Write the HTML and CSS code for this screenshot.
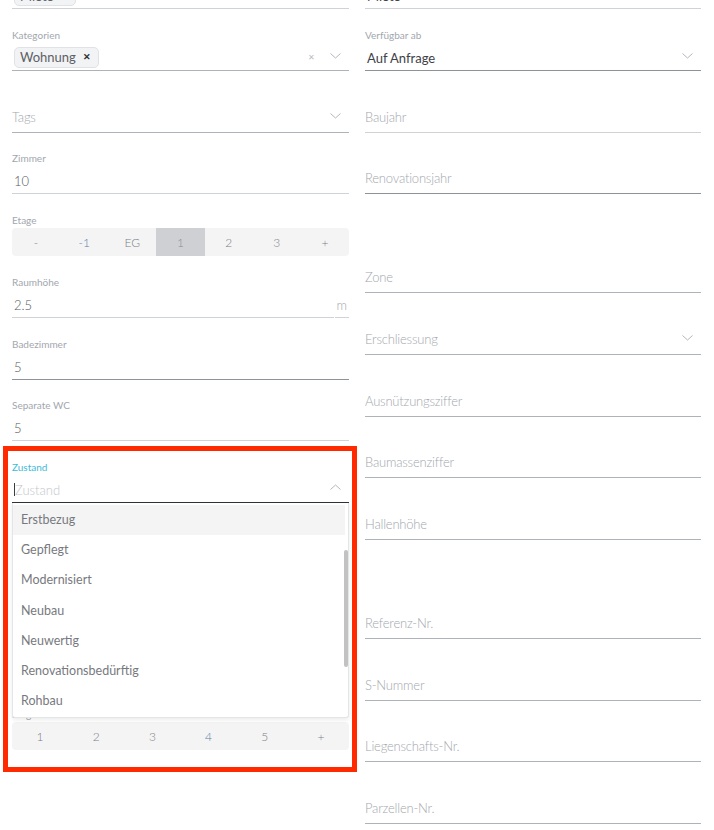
FILE: index.html
```html
<!DOCTYPE html>
<html lang="de">
<head>
<meta charset="utf-8">
<title>Objekt bearbeiten</title>
<link rel="stylesheet" href="styles.css">
</head>
<body>
<div class="page">
  <div class="col">
    <div class="field">
      <div class="label">Angebotsart</div>
      <div class="control u-light chips"><span class="chip">Miete <span class="chip-x">&#x2715;</span></span></div>
    </div>
    <div class="field">
      <div class="label">Kategorien</div>
      <div class="control u-mid chips">
        <span class="chip">Wohnung <span class="chip-x">&#x2715;</span></span>
        <span class="grow"></span>
        <span class="clear">&#x2715;</span>
        <svg class="chev" width="11" height="6" viewBox="0 0 11 6"><polyline points="0.5,0.5 5.5,5 10.5,0.5"/></svg>
      </div>
    </div>
    <div class="field">
      <div class="label"></div>
      <div class="control u-mid ph">
        <span class="ph-text">Tags</span>
        <span class="grow"></span>
        <svg class="chev" width="11" height="6" viewBox="0 0 11 6"><polyline points="0.5,0.5 5.5,5 10.5,0.5"/></svg>
      </div>
    </div>
    <div class="field">
      <div class="label">Zimmer</div>
      <div class="control u-light"><span class="value">10</span></div>
    </div>
    <div class="field">
      <div class="label">Etage</div>
      <div class="seg seg7">
        <span>-</span><span class="blue">-1</span><span>EG</span><span class="sel">1</span><span>2</span><span>3</span><span>+</span>
      </div>
    </div>
    <div class="field">
      <div class="label">Raumhöhe</div>
      <div class="control-split">
        <div class="control u-light grow-box"><span class="value">2.5</span></div>
        <div class="control u-light suffix">m</div>
      </div>
    </div>
    <div class="field">
      <div class="label">Badezimmer</div>
      <div class="control u-dark"><span class="value">5</span></div>
    </div>
    <div class="field">
      <div class="label">Separate WC</div>
      <div class="control u-light"><span class="value">5</span></div>
    </div>
    <div class="field focus">
      <div class="label label-focus">Zustand</div>
      <div class="control u-focus">
        <span class="caret"></span><span class="ph-inline">Zustand</span>
        <span class="grow"></span>
        <svg class="chev" width="11" height="6" viewBox="0 0 11 6"><polyline points="0.5,5.5 5.5,1 10.5,5.5"/></svg>
      </div>
      <div class="menu">
        <div class="opt active">Erstbezug</div>
        <div class="opt">Gepflegt</div>
        <div class="opt">Modernisiert</div>
        <div class="opt">Neubau</div>
        <div class="opt">Neuwertig</div>
        <div class="opt">Renovationsbedürftig</div>
        <div class="opt">Rohbau</div>
        <div class="scroll-thumb"></div>
      </div>
    </div>
    <div class="field">
      <div class="label">Balkone</div>
      <div class="control u-light"><span class="value">1</span></div>
    </div>
    <div class="field">
      <div class="label">Terrassen</div>
      <div class="control u-light"><span class="value">1</span></div>
    </div>
    <div class="field">
      <div class="label">Parkplätze</div>
      <div class="control u-light"><span class="value">2</span></div>
    </div>
    <div class="field">
      <div class="label">Etagen</div>
      <div class="seg seg6">
        <span>1</span><span>2</span><span>3</span><span class="blue">4</span><span>5</span><span>+</span>
      </div>
    </div>
  </div>

  <div class="col">
    <div class="field">
      <div class="label">Preis</div>
      <div class="control u-light"><span class="value strong">Miete</span></div>
    </div>
    <div class="field">
      <div class="label">Verfügbar ab</div>
      <div class="control u-dark">
        <span class="value strong">Auf Anfrage</span>
        <span class="grow"></span>
        <svg class="chev" width="11" height="6" viewBox="0 0 11 6"><polyline points="0.5,0.5 5.5,5 10.5,0.5"/></svg>
      </div>
    </div>
    <div class="field">
      <div class="label"></div>
      <div class="control u-light ph"><span class="ph-text">Baujahr</span></div>
    </div>
    <div class="field">
      <div class="label"></div>
      <div class="control u-dark ph"><span class="ph-text">Renovationsjahr</span></div>
    </div>
    <div class="spacer"></div>
    <div class="field">
      <div class="label"></div>
      <div class="control u-mid ph"><span class="ph-text">Zone</span></div>
    </div>
    <div class="field">
      <div class="label"></div>
      <div class="control u-mid ph">
        <span class="ph-text">Erschliessung</span>
        <span class="grow"></span>
        <svg class="chev" width="11" height="6" viewBox="0 0 11 6"><polyline points="0.5,0.5 5.5,5 10.5,0.5"/></svg>
      </div>
    </div>
    <div class="field">
      <div class="label"></div>
      <div class="control u-mid ph"><span class="ph-text">Ausnützungsziffer</span></div>
    </div>
    <div class="field">
      <div class="label"></div>
      <div class="control u-mid ph"><span class="ph-text">Baumassenziffer</span></div>
    </div>
    <div class="field">
      <div class="label"></div>
      <div class="control u-mid ph"><span class="ph-text">Hallenhöhe</span></div>
    </div>
    <div class="spacer"></div>
    <div class="field">
      <div class="label"></div>
      <div class="control u-mid ph"><span class="ph-text">Referenz-Nr.</span></div>
    </div>
    <div class="field">
      <div class="label"></div>
      <div class="control u-mid ph"><span class="ph-text">S-Nummer</span></div>
    </div>
    <div class="field">
      <div class="label"></div>
      <div class="control u-mid ph"><span class="ph-text">Liegenschafts-Nr.</span></div>
    </div>
    <div class="field">
      <div class="label"></div>
      <div class="control u-mid ph"><span class="ph-text">Parzellen-Nr.</span></div>
    </div>
  </div>
</div>
<div class="highlight"></div>
</body>
</html>
```

FILE: styles.css
```css
html, body {
  margin: 0;
  padding: 0;
  overflow: hidden;
  background: #ffffff;
}

body {
  font-family: Lato, "Open Sans", sans-serif;
  color: #4a4d52;
  position: relative;
  height: 830px;
}

.page {
  display: grid;
  grid-template-columns: 337px 336px;
  column-gap: 16px;
  padding-left: 12px;
  margin-top: -34px;
}

.col {
  display: flex;
  flex-direction: column;
}

.field {
  height: 61.75px;
  flex: none;
}

.spacer {
  height: 37px;
  flex: none;
}

.label {
  height: 14px;
  font-size: 10px;
  line-height: 14px;
  color: #a2a7ae;
  font-weight: 400;
}

.label-focus {
  color: #3dbbd8;
}

.control {
  box-sizing: border-box;
  height: 29px;
  border-bottom: 1px solid #c9cdd2;
  display: flex;
  align-items: flex-start;
  padding-top: 4px;
  font-size: 13px;
  line-height: 24px;
}

.u-light { border-bottom-color: #cfd2d7; }
.u-mid { border-bottom-color: #aeb3ba; }
.u-dark { border-bottom-color: #8e939a; }
.u-focus { border-bottom-color: #2f3237; }

.control.ph {
  padding-top: 1px;
}

.control.chips {
  padding-top: 5px;
  padding-left: 2px;
}

.grow { flex: 1; }

.value {
  color: #55585d;
  font-weight: 300;
  padding-left: 2px;
}

.value.strong {
  font-weight: 400;
  color: #3e4146;
}

.ph-text {
  color: #a3a8ae;
  font-weight: 300;
  letter-spacing: -0.2px;
}

.chip {
  box-sizing: border-box;
  height: 21px;
  display: inline-flex;
  align-items: center;
  padding: 0 7px 0 5px;
  background: #f2f3f5;
  border: 1px solid #e0e2e6;
  border-radius: 5px;
  font-size: 13px;
  color: #5d6065;
}

.chip-x {
  font-size: 9px;
  font-weight: 700;
  color: #2f3237;
  margin-left: 7px;
}

.clear {
  align-self: center;
  font-size: 8px;
  color: #b9bdc2;
  margin-right: 15px;
  margin-top: -3px;
}

.chev {
  align-self: center;
  margin-right: 8px;
  margin-top: -4px;
  fill: none;
  stroke: #b3b7bd;
  stroke-width: 1;
}

.u-focus .chev {
  margin-top: -6px;
}

.control-split {
  display: flex;
  gap: 1px;
}

.grow-box { flex: 1; }

.suffix {
  width: 14px;
  justify-content: flex-end;
  color: #a5a9af;
  font-weight: 300;
  padding-right: 2px;
}

.seg {
  height: 28px;
  margin-top: 1px;
  background: #f4f4f5;
  border-radius: 4px;
  display: grid;
  overflow: hidden;
  font-size: 12px;
  color: #7b7f86;
  font-weight: 300;
}

.seg7 { grid-template-columns: repeat(7, 1fr); }
.seg6 { grid-template-columns: repeat(6, 1fr); }

.seg span {
  display: flex;
  align-items: center;
  justify-content: center;
}

.seg .sel {
  background: #cfd0d3;
  color: #8a8e94;
}

.seg .blue {
  color: #5a7fa8;
}

.focus {
  position: relative;
  z-index: 2;
}

.caret {
  width: 1px;
  height: 13px;
  background: #3a3d42;
  margin-top: 5px;
  margin-left: 2px;
}

.ph-inline {
  color: #c3c6cb;
  font-weight: 300;
}

.menu {
  position: absolute;
  left: 0;
  right: 0;
  top: 43px;
  background: #ffffff;
  border: 1px solid #e4e5e7;
  border-top: 0;
  border-radius: 0 0 3px 3px;
  box-shadow: 0 2px 4px rgba(0, 0, 0, 0.08);
  padding: 2px 0 0;
  height: 215px;
  box-sizing: border-box;
}

.opt {
  height: 30.2px;
  line-height: 30px;
  padding-left: 8px;
  margin-right: 3px;
  font-size: 12.5px;
  color: #77797e;
  font-weight: 400;
}

.opt.active {
  background: #f4f4f4;
}

.scroll-thumb {
  position: absolute;
  right: 0;
  top: 47px;
  width: 4px;
  height: 117px;
  border-radius: 2px;
  background: #c2c2c2;
}

.highlight {
  position: absolute;
  left: 3px;
  top: 446px;
  width: 354px;
  height: 326px;
  box-sizing: border-box;
  border: 5px solid #ff2a00;
  z-index: 5;
  pointer-events: none;
}
```
